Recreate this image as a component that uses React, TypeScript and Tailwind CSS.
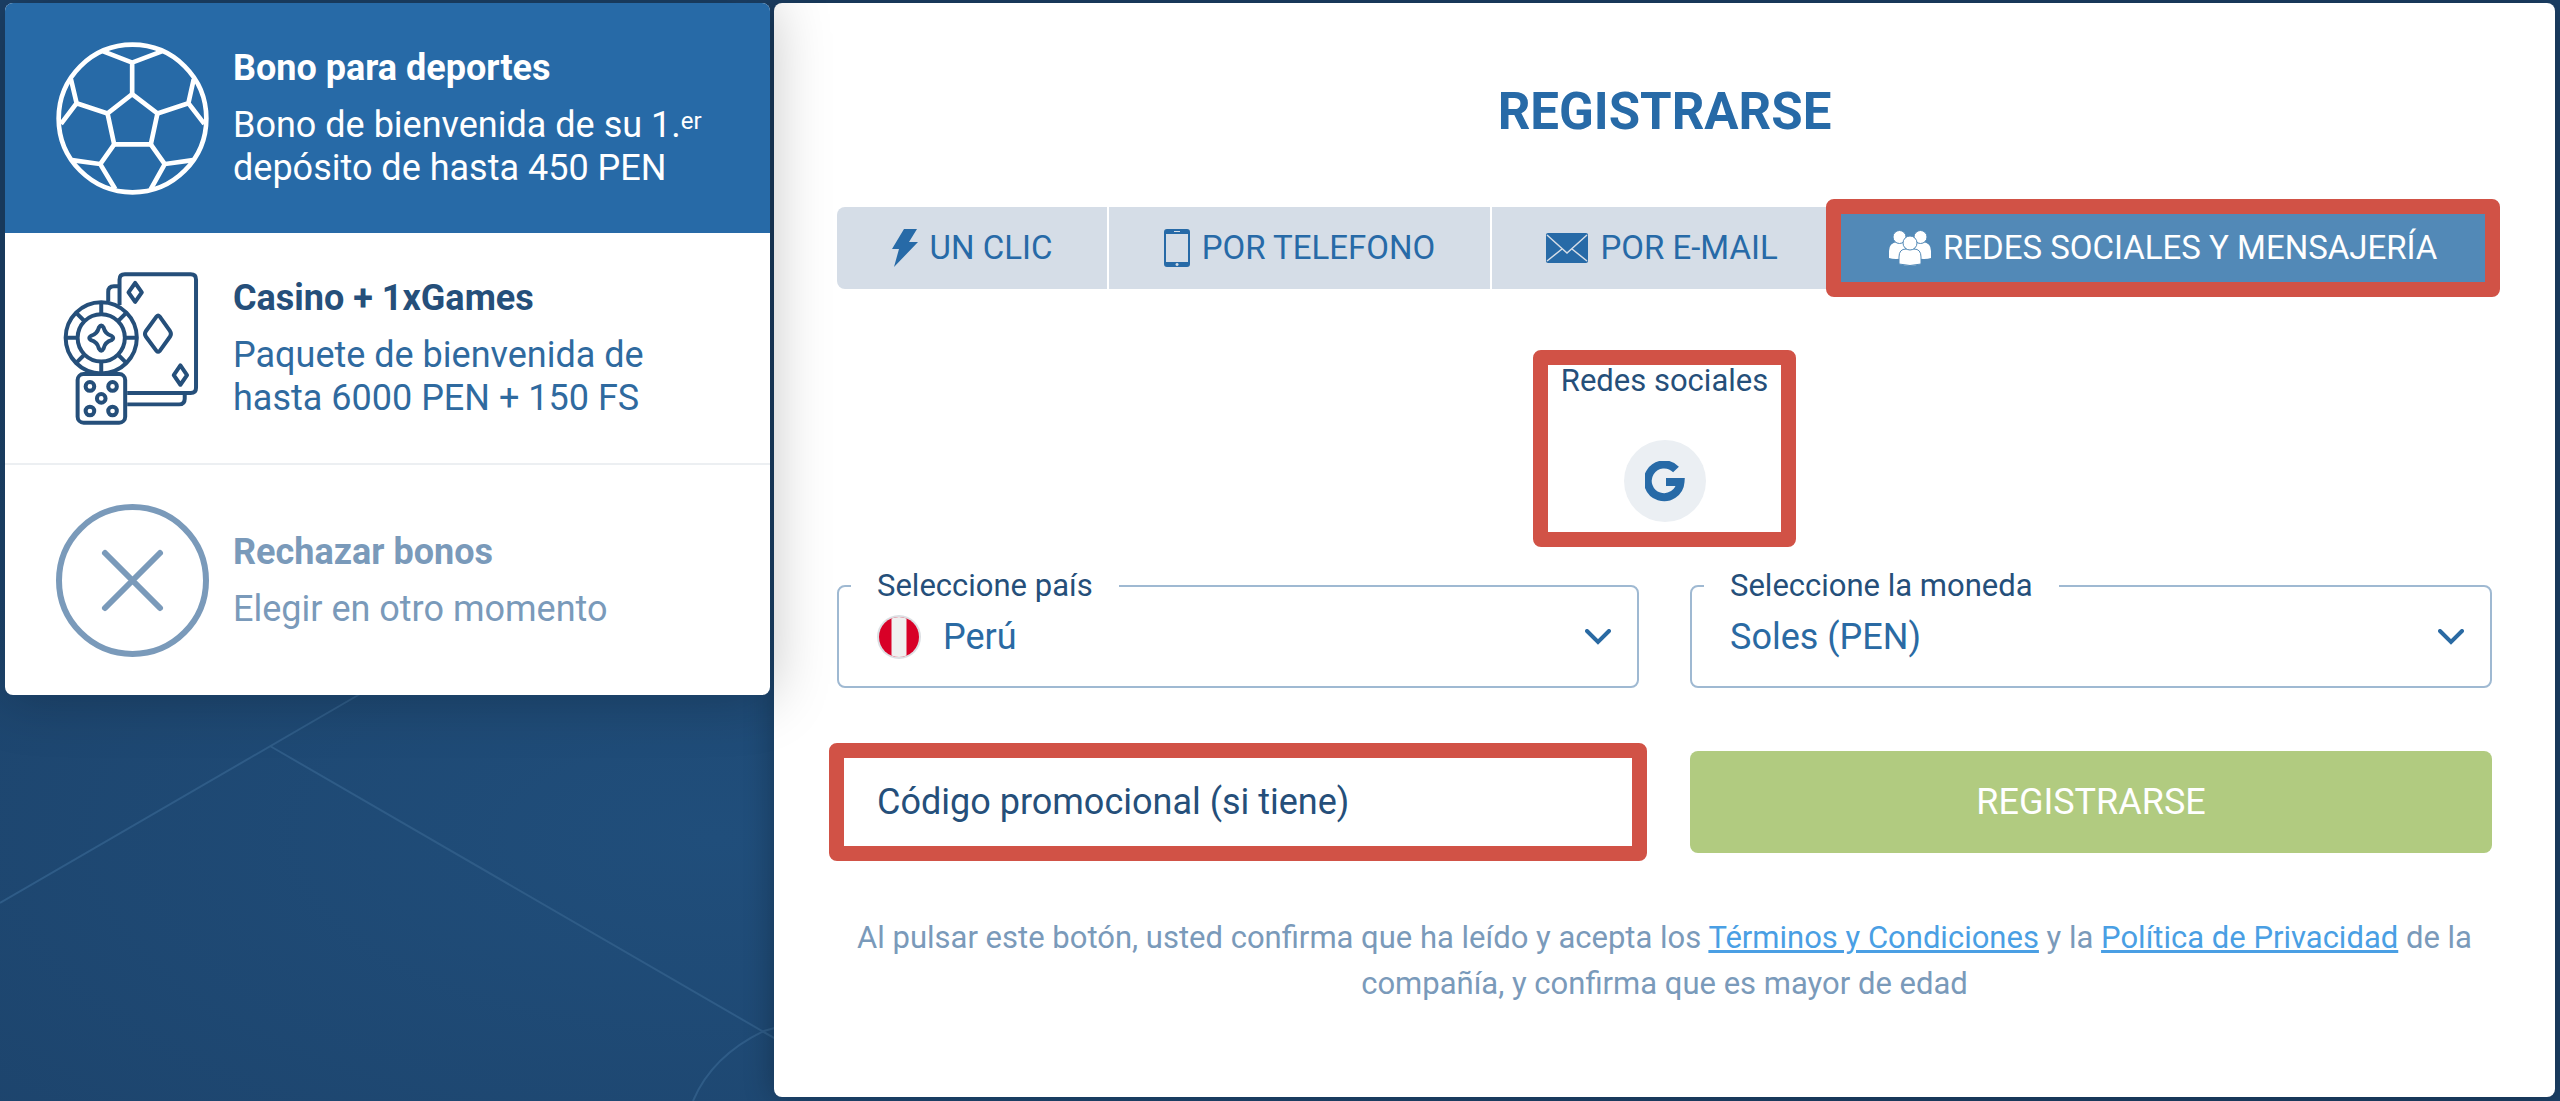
import React, { useState } from 'react';
import clsx from 'clsx';

const BallIcon = () => (
  <svg viewBox="48 36 460 460" className="size-[153px] shrink-0" fill="none" stroke="currentColor" strokeWidth="14" aria-hidden="true">
    <circle cx="278" cy="266" r="222" />
    <path d="M277 193 353 251 333 344H223L203 251Z" />
    <path d="M277 193V98M190 64 277 98 366 64" />
    <path d="M203 251 110 220M93 148 110 220 63 282" />
    <path d="M353 251 446 220M462 148 446 220 494 282" />
    <path d="M223 344 181 403M96 391 181 403 226 478" />
    <path d="M333 344 375 403M460 391 375 403 333 478" />
  </svg>
);

const CasinoIcon = () => (
  <svg viewBox="48 729 460 460" className="size-[153px] shrink-0" fill="none" stroke="currentColor" strokeWidth="12" strokeLinejoin="round" aria-hidden="true">
    <path d="M239 828V752q0-16 16-16H453q16 0 16 16V1077q0 16-16 16H262" />
    <path d="M239 772H222q-17 0-17 17V818" />
    <path d="M262 1127H418q17 0 17-17V1093" />
    <path d="M286 762 306 790 286 819 266 790ZM422 1010 442 1039 422 1068 402 1039Z" />
    <path d="M350 863q5-5 10 0L391 907q5 8 0 16L360 966q-5 5-10 0L318 923q-5-8 0-16Z" />
    <circle cx="184" cy="927" r="107" />
    <circle cx="184" cy="927" r="71" />
    <path d="M184 820v36M184 998v36M77 927h36M255 927h36M108 851l26 26M234 977l26 26M260 851l-26 26M134 977l-26 26" />
    <path d="M177 896q7-13 14 0 5 20 24 25 10 6 0 13-19 5-24 25-7 13-14 0-5-20-24-25-10-7 0-13 19-5 24-25Z" />
    <rect x="113" y="1036" width="143" height="146" rx="18" />
    <circle cx="150" cy="1073" r="13" />
    <circle cx="218" cy="1073" r="13" />
    <circle cx="184" cy="1109" r="13" />
    <circle cx="150" cy="1147" r="13" />
    <circle cx="218" cy="1147" r="13" />
  </svg>
);

const RejectIcon = () => (
  <svg viewBox="0 0 153 153" className="size-[153px] shrink-0" fill="none" stroke="currentColor" strokeWidth="6" strokeLinecap="round" aria-hidden="true">
    <circle cx="76.5" cy="76.5" r="73.5" />
    <path d="M49 49 104 104M104 49 49 104" />
  </svg>
);

const BoltIcon = () => (
  <svg viewBox="0 0 26 38" className="h-[38px] w-[26px]" fill="currentColor" aria-hidden="true">
    <path d="M12 0h13l-8 13h9L2 38l5-18H0Z" />
  </svg>
);

const PhoneIcon = () => (
  <svg viewBox="0 0 26 38" className="h-[38px] w-[26px]" fill="currentColor" aria-hidden="true">
    <path fillRule="evenodd" d="M3 0h20q3 0 3 3v32q0 3-3 3H3q-3 0-3-3V3Q0 0 3 0ZM2 5v28h22V5ZM10 2v1h6V2ZM13 34a1.5 1.5 0 1 0 .1 0Z" />
  </svg>
);

const MailIcon = () => (
  <svg viewBox="0 0 42 30" className="h-[30px] w-[42px]" aria-hidden="true">
    <rect width="42" height="30" rx="2" fill="currentColor" />
    <path d="M1 2 21 20 41 2M1 28 16 16M41 28 26 16" fill="none" stroke="#d5dde7" strokeWidth="1.5" />
  </svg>
);

const PeopleIcon = () => (
  <svg viewBox="0 0 42 36" className="h-[36px] w-[42px]" fill="currentColor" stroke="#5289b7" aria-hidden="true">
    <path stroke="none" d="M0 28V21q0-8 8-9h8v16Q6 30 0 28ZM42 28V21q0-8-8-9h-8v16q10 2 16 0Z" />
    <circle cx="10.500" cy="7" r="6.500" />
    <circle cx="31.500" cy="7" r="6.500" />
    <path d="M10 34V27q0-8 7-8h8q7 0 7 8v7q-11 3-22 0Z" />
    <circle cx="21" cy="13" r="7" />
  </svg>
);

const GoogleIcon = () => (
  <svg viewBox="0 0 40 41" className="h-[41px] w-[40px]" fill="none" stroke="currentColor" strokeWidth="8" aria-hidden="true">
    <path d="M31 8.500A16.400 16.400 0 1 0 35.500 21H21" />
  </svg>
);

const ChevronIcon = () => (
  <svg viewBox="0 0 26 16" className="pointer-events-none h-4 w-[26px] shrink-0" fill="none" stroke="currentColor" strokeWidth="4" strokeLinecap="round" aria-hidden="true">
    <path d="M2 2 13 13 24 2" />
  </svg>
);

const PeruFlag = () => (
  <svg viewBox="0 0 44 44" className="mr-[22px] size-11 shrink-0" aria-hidden="true">
    <circle cx="22" cy="22" r="22" fill="#dcdfe3" />
    <circle cx="22" cy="22" r="20" fill="#d80027" />
    <path d="M14.500 3.500Q22 .5 29.500 3.500V40.500Q22 43.500 14.500 40.500Z" fill="#f0f0f0" />
  </svg>
);

// Red frame drawn around the highlighted controls
const Highlight = () => (
  <span className="pointer-events-none absolute -inset-2 rounded-lg border-[15px] border-[#d15246]" />
);

const bonuses = [
  {
    id: 'sport',
    title: 'Bono para deportes',
    text: (
      <>
        Bono de bienvenida de su 1.<sup className="-top-2 text-[24px]">er</sup>
        <br />
        depósito de hasta 450 PEN
      </>
    ),
    icon: <BallIcon />,
    className: 'bg-[#276aa7] text-white',
    textClassName: '',
  },
  {
    id: 'casino',
    title: 'Casino + 1xGames',
    text: (
      <>
        Paquete de bienvenida de
        <br />
        hasta 6000 PEN + 150 FS
      </>
    ),
    icon: <CasinoIcon />,
    className: 'border-b-2 border-[#eceff2] text-[#254f7a]',
    textClassName: 'text-[#2f6a9f]',
  },
  {
    id: 'none',
    title: 'Rechazar bonos',
    text: 'Elegir en otro momento',
    icon: <RejectIcon />,
    className: 'text-[#7a9aba]',
    textClassName: '',
  },
];

const tabs = [
  { id: 'click', label: 'UN CLIC', icon: <BoltIcon /> },
  { id: 'phone', label: 'POR TELEFONO', icon: <PhoneIcon /> },
  { id: 'email', label: 'POR E-MAIL', icon: <MailIcon /> },
  { id: 'social', label: 'REDES SOCIALES Y MENSAJERÍA', icon: <PeopleIcon /> },
];

interface SelectFieldProps {
  id: string;
  label: string;
  options: string[];
  icon?: React.ReactNode;
}

const SelectField = ({ id, label, options, icon }: SelectFieldProps) => (
  <fieldset className="min-w-0 rounded-lg border-2 border-[#9fb9d2] pb-4">
    <legend className="ml-3 px-[26px] text-[31px] leading-[36px] text-[#254f7a]">
      <label htmlFor={id}>{label}</label>
    </legend>
    <div className="flex h-[66px] items-center pr-[26px] pl-[38px] text-[#2a6aa3]">
      {icon}
      <select id={id} className="min-w-0 flex-1 appearance-none bg-transparent text-[36px] leading-[44px] outline-none">
        {options.map((option) => (
          <option key={option}>{option}</option>
        ))}
      </select>
      <ChevronIcon />
    </div>
  </fieldset>
);

const App = () => {
  const [activeTab, setActiveTab] = useState('social');
  const [promo, setPromo] = useState('');

  return (
    <div className="relative flex min-h-screen items-start gap-1 overflow-hidden bg-radial-[at_28%_76%] from-[#204e7b] to-[#1c4168] to-50% px-[5px] pt-[3px] pb-1 font-[Roboto,sans-serif]">
      {/* field lines behind the cards */}
      <svg viewBox="0 0 800 420" className="absolute bottom-0 left-0 h-[420px] w-[800px]" fill="none" stroke="#2f5c87" strokeWidth="2" aria-hidden="true">
        <path d="M0 222 379 2M270 65 800 372" />
        <path d="M693 420Q712 375 764 350L785 344" />
      </svg>

      <aside className="relative z-10 w-[30%] shrink-0 overflow-hidden rounded-lg bg-white shadow-[0_0_60px_rgba(0,0,0,0.25)]">
        {bonuses.map((bonus) => (
          <button
            key={bonus.id}
            type="button"
            className={clsx('flex w-full items-center gap-6 px-[51px] pt-[39px] pb-[38px] text-left', bonus.className)}
          >
            {bonus.icon}
            <span className="text-[36px] leading-[43px] whitespace-nowrap">
              <span className="block font-bold">{bonus.title}</span>
              <span className={clsx('mt-3.5 block', bonus.textClassName)}>{bonus.text}</span>
            </span>
          </button>
        ))}
      </aside>

      <main className="relative min-w-0 flex-1 self-stretch rounded-lg bg-white px-[63px] pt-[77px] shadow-[0_0_30px_rgba(0,0,0,0.3)]">
        <h1 className="text-center text-[51px] leading-[64px] font-bold text-[#276aa7]">REGISTRARSE</h1>

        <div role="tablist" className="mt-[63px] flex gap-0.5">
          {tabs.map((tab) => (
            <button
              key={tab.id}
              type="button"
              role="tab"
              aria-selected={tab.id === activeTab}
              onClick={() => setActiveTab(tab.id)}
              className={clsx(
                'relative flex h-[82px] flex-auto items-center justify-center gap-3 text-[33px] whitespace-nowrap first:rounded-l-lg last:rounded-r-lg',
                tab.id === activeTab ? 'bg-[#5289b7] text-white' : 'bg-[#d5dde7] text-[#276aa7]'
              )}
            >
              {tab.icon}
              {tab.label}
              {tab.id === 'social' && <Highlight />}
            </button>
          ))}
        </div>

        <form onSubmit={(e) => e.preventDefault()}>
          <section className="relative mx-auto mt-[69px] flex h-[181px] w-[247px] flex-col items-center gap-10 pt-1">
            <h2 className="text-[31px] leading-[38px] text-[#254f7a]">Redes sociales</h2>
            <button type="button" aria-label="Google" className="flex size-[82px] items-center justify-center rounded-full bg-[#ebeff3] text-[#276aa7]">
              <GoogleIcon />
            </button>
            <Highlight />
          </section>

          <div className="mt-[29px] grid grid-cols-2 gap-x-[51px] gap-y-[63px]">
            <SelectField id="country" label="Seleccione país" options={['Perú']} icon={<PeruFlag />} />
            <SelectField id="currency" label="Seleccione la moneda" options={['Soles (PEN)']} />
            <div className="relative">
              <input
                type="text"
                aria-label="Código promocional"
                placeholder="Código promocional (si tiene)"
                value={promo}
                onChange={(e) => setPromo(e.target.value)}
                className="h-[102px] w-full rounded-lg px-10 text-[36px] text-[#254f7a] outline-none placeholder:text-[#254f7a]"
              />
              <Highlight />
            </div>
            <button type="submit" className="h-[102px] rounded-lg bg-[#b1cb80] text-[36px] text-white">
              REGISTRARSE
            </button>
          </div>
        </form>

        <p className="mt-[62px] text-center text-[31px] leading-[46px] text-[#7a9aba]">
          Al pulsar este botón, usted confirma que ha leído y acepta los{' '}
          <a href="#terms" className="text-[#4a9fe4] underline">Términos y Condiciones</a> y la{' '}
          <a href="#privacy" className="text-[#4a9fe4] underline">Política de Privacidad</a> de la compañía, y confirma que es mayor de edad
        </p>
      </main>
    </div>
  );
};

export default App;
